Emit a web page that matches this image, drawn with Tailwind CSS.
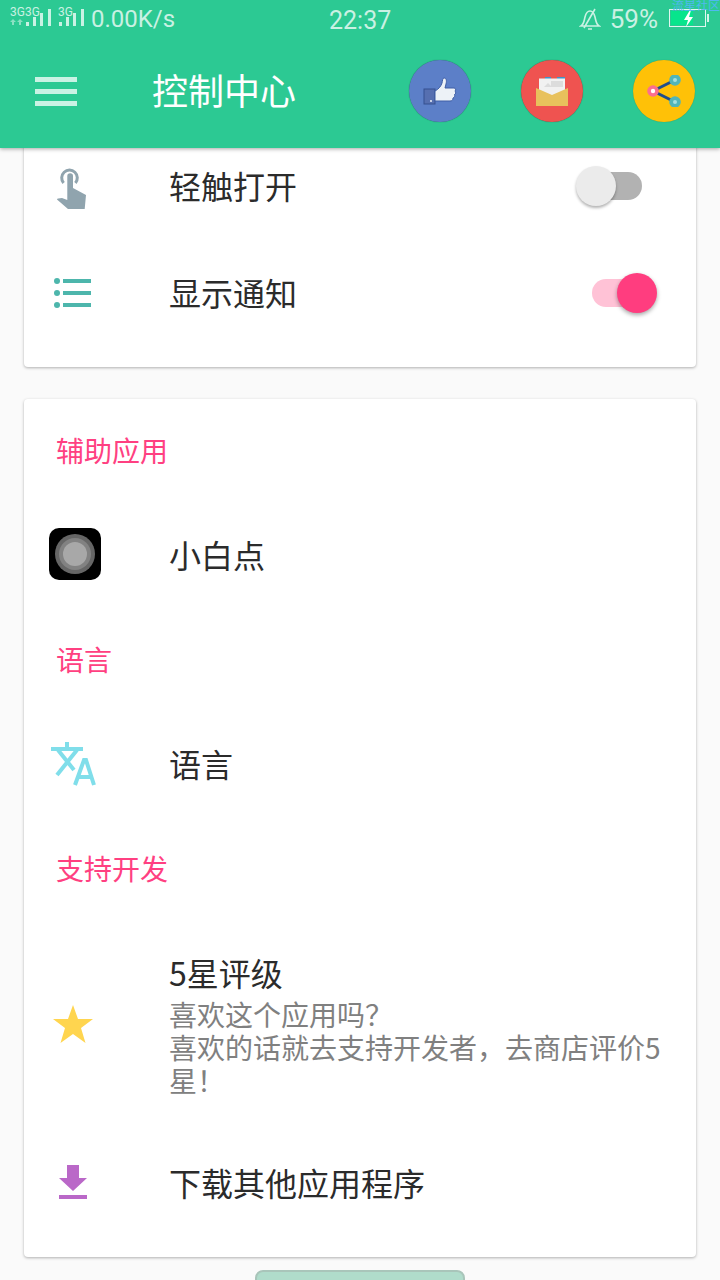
<!DOCTYPE html>
<html lang="zh">
<head>
  <meta charset="utf-8">
  <script src="https://cdn.jsdelivr.net/npm/@tailwindcss/browser@4"></script>
  <title>控制中心</title>
</head>
<body class="bg-[#fafafa] font-['Roboto','Noto_Sans_CJK_SC',sans-serif] text-[#2b2b2b]">
<div class="w-[720px] h-[1280px] overflow-hidden flex flex-col">

  <!-- header -->
  <header class="relative z-10 h-[148px] shrink-0 bg-[#2cc993] shadow-[0_1px_4px_rgba(0,0,0,0.35)]">
    <div class="relative h-[40px] flex items-center text-white/75">
      <svg class="ml-[9px] mt-[-10px]" width="78" height="28" viewBox="0 0 78 28" fill="currentColor">
        <text x="1" y="15" font-size="12" font-family="Roboto">3G</text>
        <text x="16" y="15" font-size="12" font-family="Roboto">3G</text>
        <text x="49" y="15" font-size="12" font-family="Roboto">3G</text>
        <path d="M1 21l3-3 3 3H5v3H3v-3zM8 21l3-3 3 3h-2v3h-2v-3z" opacity=".6"/>
        <rect x="17" y="21" width="3" height="4"/><rect x="24" y="16" width="3" height="9"/><rect x="31" y="12" width="3" height="13"/><rect x="39" y="8" width="3" height="17"/>
        <rect x="50" y="21" width="3" height="4"/><rect x="57" y="16" width="3" height="9"/><rect x="64" y="12" width="3" height="13"/><rect x="72" y="8" width="3" height="17"/>
      </svg>
      <span class="ml-[4px] mt-[-2px] text-[24px] leading-none">0.00K/s</span>
      <span class="absolute left-[329px] top-[8px] text-[25px] leading-[26px]">22:37</span>
      <div class="ml-auto flex items-center">
        <svg class="mt-[-2px]" width="22" height="24" viewBox="0 0 22 24" fill="none" stroke="currentColor" stroke-width="1.6">
          <path d="M2 19c3-2 3-5 4-9 1-4 3-6 5-6s4 2 5 6c1 4 1 7 4 9zM9 22h4M5 21L16 2"/>
        </svg>
        <span class="ml-[9px] mt-[-2px] text-[26px] leading-none">59%</span>
        <svg class="ml-[11px] mr-[11px] mt-[-4px]" width="40" height="20" viewBox="0 0 40 20">
          <rect x="0.5" y="1.5" width="36" height="17" fill="none" stroke="#fff" stroke-opacity=".85"/>
          <rect x="2" y="3" width="22" height="14" fill="#07e58c"/>
          <rect x="38" y="6" width="2" height="8" fill="#fff" fill-opacity=".8"/>
          <path d="M21 2l-6 10h4l-2 7 7-10h-4l2-7z" fill="#fff"/>
        </svg>
      </div>
      <span class="absolute right-0 top-[-2px] text-[12px] leading-[14px] text-[#4fb8f0] font-['Noto_Sans_CJK_SC']">流星社区</span>
    </div>

    <div class="h-[108px] flex items-center">
      <div class="ml-[35px] w-[42px] flex flex-col gap-[7px] mt-[-6px]">
        <div class="h-[5px] bg-white/75"></div>
        <div class="h-[5px] bg-white/75"></div>
        <div class="h-[5px] bg-white/75"></div>
      </div>
      <h1 class="ml-[75px] text-[36px] leading-none text-white mt-[-10px] font-['Noto_Sans_CJK_SC',sans-serif]">控制中心</h1>
      <div class="ml-auto mr-[25px] mt-[-6px] flex gap-[50px]">
        <div class="w-[62px] h-[62px] rounded-full bg-[#5c7fc8] shadow-[0_0_1px_rgba(0,0,0,0.5)] flex items-center justify-center">
          <svg width="34" height="30" viewBox="0 0 34 30">
            <rect x="1" y="13" width="11" height="15" fill="#566fb0" stroke="#34508f"/>
            <circle cx="8" cy="25" r="0.9" fill="#fff"/>
            <path d="M12 15c4-2 6-5 7-8 .5-2 .5-5 2-5 2 0 3 2 2 6l-1 4h9c2 0 2 2 1 3 1 1 1 3-.5 3.500 .5 1.500 0 3-1.500 3.500 0 2-1 3-3 3H12z" fill="#edf2f7" stroke="#3f5ea5"/>
          </svg>
        </div>
        <div class="w-[62px] h-[62px] rounded-full bg-[#ef5350] shadow-[0_0_1px_rgba(0,0,0,0.5)] flex items-center justify-center">
          <svg width="34" height="32" viewBox="0 0 34 32">
            <rect x="4" y="2" width="26" height="20" fill="#f1f1f1"/>
            <path d="M4 2h6v1.500H4zM16 2h6v1.500h-6z" fill="#e5574f"/>
            <path d="M10 2h6v1.500h-6zM22 2h8v1.500h-8z" fill="#3f94c8"/>
            <path d="M9 12l4-4 4 4zM16 6h12v6H16z" fill="#dcdcdc"/>
            <path d="M1 13l16 7 16-7v18H1z" fill="#e8c15c"/>
          </svg>
        </div>
        <div class="w-[62px] h-[62px] rounded-full bg-[#ffc107] shadow-[0_0_1px_rgba(0,0,0,0.3)] flex items-center justify-center">
          <svg width="34" height="32" viewBox="0 0 34 32">
            <path d="M6 16L28 5M6 16l22 11" stroke="#1f4e8c" stroke-width="3"/>
            <circle cx="28" cy="5" r="5.800" fill="#52b5b8"/><circle cx="28" cy="5" r="2" fill="#a5e0e0"/>
            <circle cx="28" cy="27" r="5.800" fill="#52b5b8"/><circle cx="28" cy="27" r="2" fill="#a5e0e0"/>
            <circle cx="6" cy="16" r="5.800" fill="#fb6f8f"/><circle cx="6" cy="16" r="2.200" fill="#fff"/>
          </svg>
        </div>
      </div>
    </div>
  </header>

  <main class="flex-1 min-h-0 overflow-hidden flex flex-col px-[24px]">

    <!-- card 1, scrolled under the header -->
    <section class="shrink-0 mt-[-14px] h-[233px] bg-white rounded-[4px] shadow-[0_1px_3px_rgba(0,0,0,0.3)]">
      <div class="h-[107px] flex items-center">
        <div class="w-[145px] pr-[48px] flex justify-center">
          <svg class="mt-[2px] ml-[-2px]" width="36" height="46" viewBox="56 166 36 46" fill="#90a4ae">
            <path d="M65.600 183A7.800 7.800 0 1 1 77.400 183" fill="none" stroke="#90a4ae" stroke-width="3"/>
            <path d="M69.300 176a2.800 2.800 0 0 1 5.700 0V188L88 195L86.700 209H70L59 199.500Q59 198 64 198L69.300 200Z"/>
          </svg>
        </div>
        <span class="mt-[-5px] text-[32px] leading-none font-['Noto_Sans_CJK_SC',sans-serif]">轻触打开</span>
        <div class="relative ml-auto mr-[54px] mt-[-4px] w-[50px] h-[28px] rounded-full bg-[#b2b2b2]">
          <div class="absolute left-[-16px] top-[-6px] w-[40px] h-[40px] rounded-full bg-[#ebebeb] shadow-[0_2px_3px_rgba(0,0,0,0.3)]"></div>
        </div>
      </div>
      <div class="h-[107px] flex items-center">
        <div class="w-[145px] pr-[48px] flex justify-center">
          <div class="flex flex-col gap-[6px] mt-[-4px]">
            <div class="flex items-center gap-[3px]"><span class="w-[6px] h-[6px] rounded-full bg-[#4db6ac]"></span><span class="w-[28px] h-[4px] bg-[#4db6ac]"></span></div>
            <div class="flex items-center gap-[3px]"><span class="w-[6px] h-[6px] rounded-full bg-[#4db6ac]"></span><span class="w-[28px] h-[4px] bg-[#4db6ac]"></span></div>
            <div class="flex items-center gap-[3px]"><span class="w-[6px] h-[6px] rounded-full bg-[#4db6ac]"></span><span class="w-[28px] h-[4px] bg-[#4db6ac]"></span></div>
          </div>
        </div>
        <span class="mt-[-5px] text-[32px] leading-none font-['Noto_Sans_CJK_SC',sans-serif]">显示通知</span>
        <div class="relative ml-auto mr-[54px] mt-[-4px] w-[50px] h-[28px] rounded-full bg-[#ffc2d6]">
          <div class="absolute right-[-15px] top-[-6px] w-[40px] h-[40px] rounded-full bg-[#ff3d7f] shadow-[0_2px_4px_rgba(0,0,0,0.35)]"></div>
        </div>
      </div>
    </section>

    <!-- card 2 -->
    <section class="shrink-0 mt-[32px] h-[858px] bg-white rounded-[4px] shadow-[0_1px_3px_rgba(0,0,0,0.3)] font-['Noto_Sans_CJK_SC',sans-serif]">
      <div class="h-[105px] pl-[32px] pt-[35px] text-[28px] leading-[32px] text-[#ff4081]">辅助应用</div>
      <div class="h-[105px] flex items-center">
        <div class="w-[145px] pr-[48px] flex justify-center">
          <div class="ml-[5px] mt-[-6px] w-[52px] h-[52px] rounded-[10px] bg-black flex items-center justify-center">
            <div class="w-[40px] h-[40px] rounded-full bg-[#666] flex items-center justify-center">
              <div class="w-[32px] h-[32px] rounded-full bg-[#828282] flex items-center justify-center">
                <div class="w-[24px] h-[24px] rounded-full bg-[#a8a8a8]"></div>
              </div>
            </div>
          </div>
        </div>
        <span class="mt-[-5px] text-[32px] leading-none">小白点</span>
      </div>
      <div class="h-[104px] pl-[32px] pt-[34px] text-[28px] leading-[32px] text-[#ff4081]">语言</div>
      <div class="h-[105px] flex items-center">
        <div class="w-[145px] pr-[48px] flex justify-center">
          <svg class="mt-[-4px]" width="46" height="44" viewBox="50 742 46 44" fill="none" stroke="#80deea" stroke-width="4">
            <path d="M51 749h32M67 742v7M58 750L74 770M77 750L57 775M75 785l9-25h2l8 25M78 777h14"/>
          </svg>
        </div>
        <span class="mt-[-5px] text-[32px] leading-none">语言</span>
      </div>
      <div class="h-[104px] pl-[32px] pt-[34px] text-[28px] leading-[32px] text-[#ff4081]">支持开发</div>
      <div class="h-[210px] flex items-center">
        <div class="w-[145px] pr-[48px] flex justify-center">
          <svg class="mt-[-7px]" width="40" height="38" viewBox="0 0 40 38" fill="#ffd54f">
            <path d="M20 0l5 14h15l-12 9 4.500 15L20 29 7.500 38 12 23 0 14h15z"/>
          </svg>
        </div>
        <div class="flex-1 pr-[30px] mt-[-4px]">
          <div class="text-[32px] leading-[36px] mb-[8px]">5星评级</div>
          <p class="text-[28px] leading-[33px] text-[#808080]">喜欢这个应用吗？<br>喜欢的话就去支持开发者，去商店评价5星！</p>
        </div>
      </div>
      <div class="h-[105px] flex items-center">
        <div class="w-[145px] pr-[48px] flex justify-center">
          <svg class="mt-[-6px]" width="28" height="34" viewBox="0 0 28 34" fill="#ba68c8">
            <path d="M8 0h12v13h8L14 26 0 13h8zM0 30h28v4H0z"/>
          </svg>
        </div>
        <span class="mt-[-5px] text-[32px] leading-none">下载其他应用程序</span>
      </div>
    </section>

    <!-- bottom button, cut off by the screen edge -->
    <div class="shrink-0 mt-[13px] mx-auto w-[210px] h-[40px] rounded-[8px] bg-[#b0dccb] border-2 border-[#a9c5ba]"></div>
  </main>
</div>
</body>
</html>
